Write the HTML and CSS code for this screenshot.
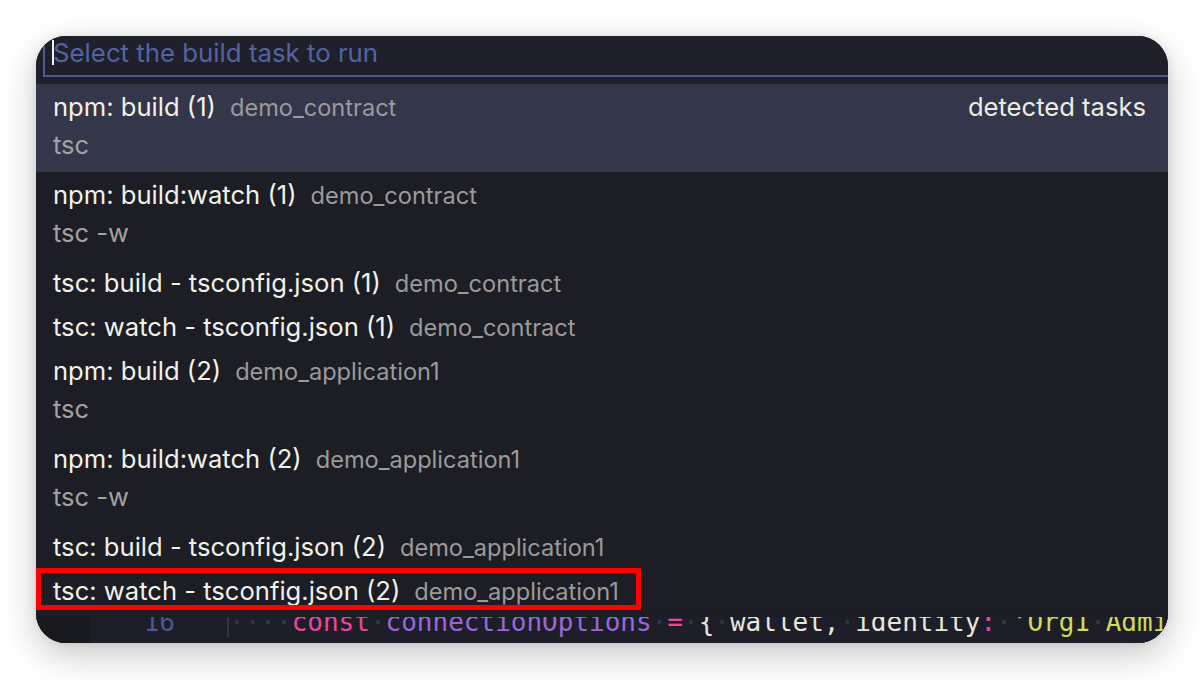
FILE: index.html
```html
<!DOCTYPE html>
<html lang="en">
<head>
<meta charset="utf-8">
<title>Select the build task to run</title>
<link rel="stylesheet" href="styles.css">
</head>
<body>
<div class="page">
  <div class="window">
    <div class="input-row">
      <div class="input"><span class="caret"></span><span class="placeholder">Select the build task to run</span></div>
    </div>
    <ul class="list">
      <li class="item two selected">
        <div class="label-line"><span class="label">npm: build (1)</span><span class="desc">demo_contract</span><span class="group">detected tasks</span></div>
        <div class="detail">tsc</div>
      </li>
      <li class="item two">
        <div class="label-line"><span class="label">npm: build:watch (1)</span><span class="desc">demo_contract</span></div>
        <div class="detail">tsc -w</div>
      </li>
      <li class="item">
        <div class="label-line"><span class="label">tsc: build - tsconfig.json (1)</span><span class="desc">demo_contract</span></div>
      </li>
      <li class="item">
        <div class="label-line"><span class="label">tsc: watch - tsconfig.json (1)</span><span class="desc">demo_contract</span></div>
      </li>
      <li class="item two">
        <div class="label-line"><span class="label">npm: build (2)</span><span class="desc">demo_application1</span></div>
        <div class="detail">tsc</div>
      </li>
      <li class="item two">
        <div class="label-line"><span class="label">npm: build:watch (2)</span><span class="desc">demo_application1</span></div>
        <div class="detail">tsc -w</div>
      </li>
      <li class="item">
        <div class="label-line"><span class="label">tsc: build - tsconfig.json (2)</span><span class="desc">demo_application1</span></div>
      </li>
      <li class="item">
        <div class="label-line"><span class="label">tsc: watch - tsconfig.json (2)</span><span class="desc">demo_application1</span></div>
      </li>
    </ul>
    <div class="editor">
      <div class="editor-side"></div>
      <div class="editor-body">
        <div class="code-clip">
          <span class="ln">16</span>
          <span class="code"><span class="ws">····</span><span class="kw">const</span><span class="ws">·</span><span class="var">connectionOptions</span><span class="ws">·</span><span class="op">=</span><span class="ws">·</span><span class="plain">{</span><span class="ws">·</span><span class="plain">wallet,</span><span class="ws">·</span><span class="plain">identity</span><span class="op">:</span><span class="ws">·</span><span class="str">'Org1</span><span class="ws">·</span><span class="str">Admin'</span></span>
        </div>
      </div>
    </div>
  </div>
  <div class="highlight"></div>
</div>
</body>
</html>
```

FILE: styles.css
```css
* { box-sizing: border-box; }

html, body {
  margin: 0;
  padding: 0;
  background: #ffffff;
}

body {
  font-family: Inter, "Noto Sans", "Liberation Sans", sans-serif;
  width: 1204px;
  height: 680px;
  overflow: hidden;
}

.page {
  position: relative;
  padding: 36px 36px 37px 36px;
  height: 680px;
}

.window {
  width: 1132px;
  height: 607px;
  border-radius: 30px;
  overflow: hidden;
  background: #1c1d25;
  box-shadow: 0 12px 36px rgba(0, 0, 0, 0.22), 0 0 10px rgba(0, 0, 0, 0.08);
  display: flex;
  flex-direction: column;
}

/* input */
.input-row {
  height: 48px;
  flex: none;
  background: #1f2029;
  padding-left: 7px;
  overflow: hidden;
}

.input {
  margin-top: -4px;
  margin-right: -20px;
  height: 45px;
  border: 2px solid #4a5b98;
  display: flex;
  align-items: center;
  padding-left: 7px;
  padding-bottom: 4px;
}

.caret {
  display: inline-block;
  width: 2px;
  height: 25px;
  background: #f2f2f2;
  flex: none;
}

.placeholder {
  font-size: 25.8px;
  color: #5064a6;
  margin-left: -1px;
  white-space: nowrap;
}

/* list */
.list {
  list-style: none;
  margin: 0;
  padding: 0;
  height: 528px;
  flex: none;
}

.item {
  padding: 4px 22px 2px 17px;
}

.item.two {
  padding-bottom: 8px;
}

.item.selected {
  background: #343649;
}

.label-line {
  display: flex;
  align-items: baseline;
  line-height: 38px;
  height: 38px;
  white-space: nowrap;
}

.label {
  font-size: 25.6px;
  color: #f1f1ea;
}

.desc {
  font-size: 23.6px;
  color: #9b9b9b;
  margin-left: 14px;
}

.group {
  margin-left: auto;
  font-size: 25.6px;
  color: #ecece4;
}

.detail {
  font-size: 25.5px;
  line-height: 38px;
  height: 38px;
  color: #a2a2a2;
}

/* editor strip */
.editor {
  flex: 1;
  display: flex;
  background: #1c1d24;
}

.editor-side {
  width: 54px;
  flex: none;
  margin-top: 5px;
  background: #18191f;
}

.editor-body {
  flex: 1;
  margin-top: 5px;
  background: #1d1e27;
  overflow: hidden;
}

.code-clip {
  display: flex;
  align-items: baseline;
  margin-top: -10px;
  white-space: pre;
  font-family: "DejaVu Sans Mono", "Liberation Mono", monospace;
  font-size: 26px;
}

.ln {
  width: 85px;
  text-align: right;
  color: #4a5992;
  flex: none;
}

.code {
  margin-left: 52px;
  border-left: 2px solid #34353f;
  color: #e6e6de;
}

.ws { color: #34353f; }
.kw { color: #f0449d; }
.var { color: #9a66dd; }
.op { color: #f0449d; }
.plain { color: #e6e6de; }
.str { color: #cfdc56; }

/* annotation box over the last row */
.highlight {
  position: absolute;
  left: 36px;
  top: 568px;
  width: 605px;
  height: 42px;
  border: 5px solid #ff0000;
}
```
